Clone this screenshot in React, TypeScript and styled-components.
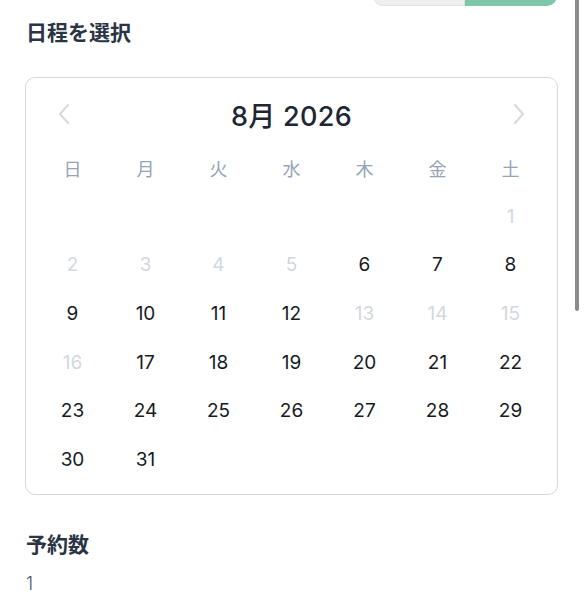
import React from "react";
import styled, { createGlobalStyle } from "styled-components";

const GlobalStyle = createGlobalStyle`
  html, body { margin: 0; padding: 0; background: #ffffff; overflow: hidden; }
  body { font-family: Inter, "Noto Sans CJK JP", "Noto Sans", sans-serif; }
`;

const Page = styled.div`
  position: relative;
  width: 584px;
  height: 600px;
  box-sizing: border-box;
  padding: 0 26px 0 25px;
  overflow: hidden;
`;

const ButtonRow = styled.div`
  display: flex;
  justify-content: flex-end;
  margin-top: -34px;
  padding-right: 1px;
`;

const Segment = styled.div<{ $active?: boolean }>`
  width: 92px;
  height: 40px;
  background: ${(p) => (p.$active ? "#7dc8ab" : "#efefef")};
  border: ${(p) => (p.$active ? "none" : "1px solid #e2e2e2")};
  box-sizing: border-box;
  &:first-child { border-radius: 0 0 0 10px; }
  &:last-child { border-radius: 0 0 10px 0; }
`;

const SectionTitle = styled.h2<{ $top: number }>`
  margin: ${(p) => p.$top}px 0 0 1px;
  font-family: "Noto Sans CJK JP", sans-serif;
  font-size: 21px;
  line-height: 28px;
  font-weight: 700;
  color: #2a3444;
`;

const Card = styled.div`
  margin-top: 32px;
  border: 1px solid #d5d8de;
  border-radius: 10px;
  padding: 16px 10px 10px;
`;

const Header = styled.div`
  height: 40px;
  display: flex;
  align-items: center;
  justify-content: space-between;
  padding: 0 21px 0 21px;
`;

const MonthLabel = styled.div`
  font-family: Inter, "Noto Sans CJK JP", sans-serif;
  font-size: 27px;
  font-weight: 500;
  color: #1f2633;
  letter-spacing: 0.3px;
`;

const NavButton = styled.button`
  width: 14px;
  height: 24px;
  padding: 0;
  border: none;
  background: none;
  display: flex;
  align-items: center;
  justify-content: center;
`;

const Grid = styled.div<{ $rowH: number }>`
  display: grid;
  grid-template-columns: repeat(7, 1fr);
  grid-auto-rows: ${(p) => p.$rowH}px;
`;

const WeekGrid = styled(Grid)`
  margin-top: 10px;
`;

const Weekday = styled.div`
  display: flex;
  align-items: center;
  justify-content: center;
  font-family: "Noto Sans CJK JP", sans-serif;
  font-size: 18px;
  color: #97a3b6;
`;

const Day = styled.div<{ $disabled?: boolean }>`
  display: flex;
  align-items: center;
  justify-content: center;
  font-family: Inter, sans-serif;
  font-size: 19px;
  color: ${(p) => (p.$disabled ? "#d3d7de" : "#161a22")};
`;

const Value = styled.div`
  margin: 15px 0 0 1px;
  font-family: Inter, sans-serif;
  font-size: 18px;
  line-height: 24px;
  font-weight: 300;
  color: #4a5568;
`;

const ScrollThumb = styled.div`
  position: absolute;
  top: 0;
  right: 5px;
  width: 4px;
  height: 311px;
  background: #8c8c8c;
  border-radius: 0 0 2px 2px;
`;

const Chevron = ({ dir }: { dir: "left" | "right" }) => (
  <svg width="14" height="24" viewBox="0 0 14 24" fill="none">
    <path
      d={dir === "left" ? "M11 3 L3 12 L11 21" : "M3 3 L11 12 L3 21"}
      stroke="#d6d9de"
      strokeWidth="2"
      strokeLinecap="round"
      strokeLinejoin="round"
    />
  </svg>
);

const weekdays = ["日", "月", "火", "水", "木", "金", "土"];
const disabledDays = new Set([1, 2, 3, 4, 5, 13, 14, 15, 16]);

export default function App() {
  const startOffset = 6; // Aug 1 2026 is Saturday
  const cells: (number | null)[] = [];
  for (let i = 0; i < startOffset; i++) cells.push(null);
  for (let d = 1; d <= 31; d++) cells.push(d);

  return (
    <>
      <GlobalStyle />
      <Page>
        <ButtonRow>
          <Segment />
          <Segment $active />
        </ButtonRow>
        <SectionTitle $top={11}>日程を選択</SectionTitle>
        <Card>
          <Header>
            <NavButton aria-label="前の月">
              <Chevron dir="left" />
            </NavButton>
            <MonthLabel>8月 2026</MonthLabel>
            <NavButton aria-label="次の月">
              <Chevron dir="right" />
            </NavButton>
          </Header>
          <WeekGrid $rowH={48}>
            {weekdays.map((w) => (
              <Weekday key={w}>{w}</Weekday>
            ))}
          </WeekGrid>
          <Grid $rowH={48.67}>
            {cells.map((d, i) =>
              d === null ? (
                <Day key={`e${i}`} />
              ) : (
                <Day key={d} $disabled={disabledDays.has(d)}>
                  {d}
                </Day>
              )
            )}
          </Grid>
        </Card>
        <SectionTitle $top={34}>予約数</SectionTitle>
        <Value>1</Value>
        <ScrollThumb />
      </Page>
    </>
  );
}
